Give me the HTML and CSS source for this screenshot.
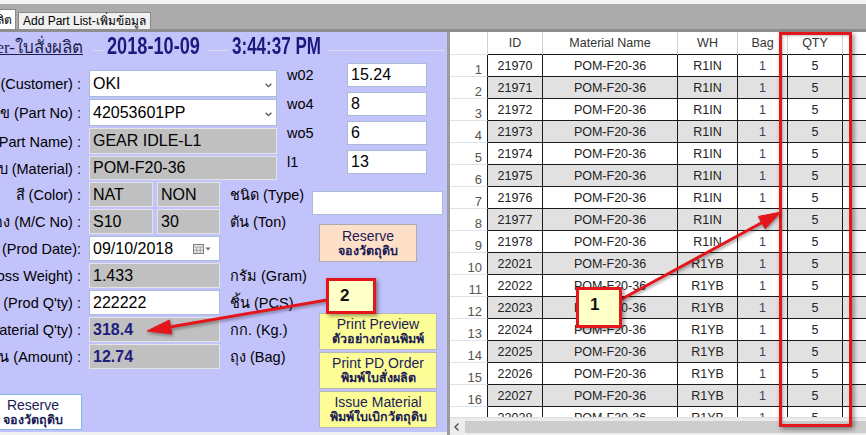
FILE: index.html
```html
<!DOCTYPE html>
<html lang="th">
<head>
<meta charset="utf-8">
<title>Production Order</title>
<link rel="stylesheet" href="styles.css">
</head>
<body>
<div class="tabbar">
  <div class="tab tab-active">ใบสั่งผลิต</div>
  <div class="tab">Add Part List-เพิ่มข้อมูล</div>
</div>
<div class="main">
  <section class="form-pane">
    <header class="form-head">
      <div class="title"><span>Production Order-ใบสั่งผลิต</span></div>
      <div class="rule rule-a"></div>
      <div class="stamp stamp-date"><span>2018-10-09</span></div>
      <div class="rule rule-b"></div>
      <div class="stamp stamp-time"><span>3:44:37 PM</span></div>
      <div class="rule rule-c"></div>
    </header>
    <div class="form-body">
      <div class="form-col">
        <div class="row h27">
          <div class="label"><span>ลูกค้า (Customer) :</span></div>
          <div class="field w188 combo"><span>OKI</span><svg class="chev" width="7" height="5" viewBox="0 0 7 5"><path d="M0.6 0.8l2.9 2.9 2.9-2.9" fill="none" stroke="#555" stroke-width="1.3"/></svg></div>
        </div>
        <div class="row h27">
          <div class="label"><span>หมายเลข (Part No) :</span></div>
          <div class="field w188 combo"><span>42053601PP</span><svg class="chev" width="7" height="5" viewBox="0 0 7 5"><path d="M0.6 0.8l2.9 2.9 2.9-2.9" fill="none" stroke="#555" stroke-width="1.3"/></svg></div>
        </div>
        <div class="row h26">
          <div class="label"><span>ชื่อชิ้นงาน (Part Name) :</span></div>
          <div class="field w188 locked">GEAR IDLE-L1</div>
        </div>
        <div class="row h24">
          <div class="label"><span>วัตถุดิบ (Material) :</span></div>
          <div class="field w188 locked">POM-F20-36</div>
        </div>
        <div class="row">
          <div class="label"><span>สี (Color) :</span></div>
          <div class="field w64 locked">NAT</div>
          <div class="field w63 locked">NON</div>
          <span class="suffix">ชนิด (Type)</span>
        </div>
        <div class="row">
          <div class="label"><span>เครื่อง (M/C No) :</span></div>
          <div class="field w64 locked">S10</div>
          <div class="field w63 locked">30</div>
          <span class="suffix">ตัน (Ton)</span>
        </div>
        <div class="row">
          <div class="label"><span>วันที่ผลิต (Prod Date):</span></div>
          <div class="field w131 datepick"><span>09/10/2018</span>
            <svg width="19" height="10" viewBox="0 0 19 10"><rect x="0.5" y="0.5" width="10" height="9" fill="#ececec" stroke="#7b7b7b"/><path d="M0.5 3h10M3.7 3v6.5M7.2 3v6.5M0.5 6.2h10" stroke="#a3a3a3"/><path d="M12.5 3.5h5l-2.5 3z" fill="#6b6b6b"/></svg>
          </div>
        </div>
        <div class="row">
          <div class="label"><span>น้ำหนัก (Gross Weight) :</span></div>
          <div class="field w131 locked">1.433</div>
          <span class="suffix">กรัม (Gram)</span>
        </div>
        <div class="row">
          <div class="label"><span>จำนวนผลิต (Prod Q'ty) :</span></div>
          <div class="field w131">222222</div>
          <span class="suffix">ชิ้น (PCS)</span>
        </div>
        <div class="row">
          <div class="label"><span>วัตถุดิบ (Material Q'ty) :</span></div>
          <div class="field w131 locked strong">318.4</div>
          <span class="suffix">กก. (Kg.)</span>
        </div>
        <div class="row">
          <div class="label"><span>จำนวน (Amount) :</span></div>
          <div class="field w131 locked strong">12.74</div>
          <span class="suffix">ถุง (Bag)</span>
        </div>
        <button class="btn btn-white"><span class="en">Reserve</span><span class="th">จองวัตถุดิบ</span></button>
      </div>
      <div class="side-col">
        <div class="wrow"><span class="wlabel">w02</span><div class="field wfield">15.24</div></div>
        <div class="wrow"><span class="wlabel">wo4</span><div class="field wfield">8</div></div>
        <div class="wrow"><span class="wlabel">wo5</span><div class="field wfield">6</div></div>
        <div class="wrow"><span class="wlabel">l1</span><div class="field wfield">13</div></div>
        <div class="field type-box"></div>
        <button class="btn btn-peach"><span class="en">Reserve</span><span class="th">จองวัตถุดิบ</span></button>
        <div class="print-group">
          <button class="btn btn-yellow"><span class="en">Print Preview</span><span class="th">ตัวอย่างก่อนพิมพ์</span></button>
          <button class="btn btn-yellow"><span class="en">Print PD Order</span><span class="th">พิมพ์ใบสั่งผลิต</span></button>
          <button class="btn btn-yellow"><span class="en">Issue Material</span><span class="th">พิมพ์ใบเบิกวัตถุดิบ</span></button>
        </div>
      </div>
    </div>
  </section>
  <section class="grid-pane">
    <div class="grid-scroll">
      <table class="grid">
        <colgroup><col class="c-rh"><col class="c-id"><col class="c-mat"><col class="c-wh"><col class="c-bag"><col class="c-qty"><col class="c-x"></colgroup>
        <thead>
          <tr><th class="rh"></th><th>ID</th><th>Material Name</th><th>WH</th><th>Bag</th><th>QTY</th><th></th></tr>
        </thead>
        <tbody>
          <tr><td class="rh">1</td><td>21970</td><td>POM-F20-36</td><td>R1IN</td><td class="bag">1</td><td>5</td><td></td></tr>
          <tr><td class="rh">2</td><td>21971</td><td>POM-F20-36</td><td>R1IN</td><td class="bag">1</td><td>5</td><td></td></tr>
          <tr><td class="rh">3</td><td>21972</td><td>POM-F20-36</td><td>R1IN</td><td class="bag">1</td><td>5</td><td></td></tr>
          <tr><td class="rh">4</td><td>21973</td><td>POM-F20-36</td><td>R1IN</td><td class="bag">1</td><td>5</td><td></td></tr>
          <tr><td class="rh">5</td><td>21974</td><td>POM-F20-36</td><td>R1IN</td><td class="bag">1</td><td>5</td><td></td></tr>
          <tr><td class="rh">6</td><td>21975</td><td>POM-F20-36</td><td>R1IN</td><td class="bag">1</td><td>5</td><td></td></tr>
          <tr><td class="rh">7</td><td>21976</td><td>POM-F20-36</td><td>R1IN</td><td class="bag">1</td><td>5</td><td></td></tr>
          <tr><td class="rh">8</td><td>21977</td><td>POM-F20-36</td><td>R1IN</td><td class="bag">1</td><td>5</td><td></td></tr>
          <tr><td class="rh">9</td><td>21978</td><td>POM-F20-36</td><td>R1IN</td><td class="bag">1</td><td>5</td><td></td></tr>
          <tr><td class="rh">10</td><td>22021</td><td>POM-F20-36</td><td>R1YB</td><td class="bag">1</td><td>5</td><td></td></tr>
          <tr><td class="rh">11</td><td>22022</td><td>POM-F20-36</td><td>R1YB</td><td class="bag">1</td><td>5</td><td></td></tr>
          <tr><td class="rh">12</td><td>22023</td><td>POM-F20-36</td><td>R1YB</td><td class="bag">1</td><td>5</td><td></td></tr>
          <tr><td class="rh">13</td><td>22024</td><td>POM-F20-36</td><td>R1YB</td><td class="bag">1</td><td>5</td><td></td></tr>
          <tr><td class="rh">14</td><td>22025</td><td>POM-F20-36</td><td>R1YB</td><td class="bag">1</td><td>5</td><td></td></tr>
          <tr><td class="rh">15</td><td>22026</td><td>POM-F20-36</td><td>R1YB</td><td class="bag">1</td><td>5</td><td></td></tr>
          <tr><td class="rh">16</td><td>22027</td><td>POM-F20-36</td><td>R1YB</td><td class="bag">1</td><td>5</td><td></td></tr>
          <tr><td class="rh">17</td><td>22028</td><td>POM-F20-36</td><td>R1YB</td><td class="bag">1</td><td>5</td><td></td></tr>
        </tbody>
      </table>
    </div>
    <div class="hscroll">
      <svg class="hs-arrow" width="15" height="18" viewBox="0 0 15 18"><path d="M8.5 5.5l-3.5 3.5 3.5 3.5" fill="none" stroke="#606060" stroke-width="1.6"/></svg>
      <div class="hs-thumb"></div>
    </div>
  </section>
</div>

<div class="qty-frame"></div>
<svg class="arrows" width="866" height="435" viewBox="0 0 866 435">
  <g fill="#e3161c" stroke="#e3161c">
    <line x1="620" y1="300" x2="763" y2="222" stroke-width="3"/>
    <polygon points="781,212 765.1,228.7 758.3,216.5" stroke-width="1"/>
    <line x1="327" y1="300" x2="170" y2="327" stroke-width="3"/>
    <polygon points="147,331 171.8,333.8 169.4,320" stroke-width="1"/>
  </g>
</svg>
<div class="callout c1">1</div>
<div class="callout c2">2</div>
</body>
</html>
```

FILE: styles.css
```css
* { box-sizing: border-box; }
html, body { margin: 0; padding: 0; }
body {
  width: 866px;
  height: 435px;
  overflow: hidden;
  position: relative;
  background: #f0f0f0;
  font-family: "Liberation Sans", Arial, "Noto Sans", sans-serif;
  color: #000;
}

/* ---------- tab strip ---------- */
.tabbar {
  height: 32px;
  background: #ababab;
  border-top: 4px solid #f3f3f3;
  border-bottom: 3px solid #8e8e8e;
  display: flex;
  align-items: flex-end;
  gap: 2px;
}
.tab {
  height: 17px;
  padding: 0 4px;
  font-size: 12px;
  line-height: 16px;
  background: #f0f0f0;
  border: 1px solid #8a8a8a;
  border-bottom: none;
  white-space: nowrap;
}
.tab-active {
  width: 70px;
  height: 20px;
  margin-left: -54px;
  background: #fff;
  text-align: right;
  line-height: 20px;
  padding-right: 3px;
}

/* ---------- main split ---------- */
.main { display: flex; height: 403px; }
.form-pane {
  width: 447px;
  flex: none;
  height: 400px;
  background: #c3c3fb;
  display: flex;
  flex-direction: column;
}
.grid-pane {
  flex: 1;
  min-width: 0;
  background: #fff;
  border-left: 3px solid #9c9c9c;
  display: flex;
  flex-direction: column;
}

/* ---------- form header ---------- */
.form-head {
  height: 31px;
  flex: none;
  display: flex;
  align-items: center;
  padding-bottom: 3px;
  white-space: nowrap;
}
.title {
  width: 83px;
  flex: none;
  display: flex;
  justify-content: flex-end;
}
.title span {
  flex: none;
  font-family: "Liberation Serif", "Times New Roman", serif;
  font-size: 17px;
  color: #1d1d4e;
  text-decoration: underline;
  text-decoration-thickness: 1px;
}
.rule {
  height: 1px;
  background: #dcdcee;
  align-self: flex-start;
  margin-top: 18px;
  flex: none;
}
.rule-a { width: 10px; margin-left: 10px; margin-right: 4px; }
.rule-b { width: 20px; margin-left: 8px; margin-right: 4px; }
.rule-c { flex: 1; margin-left: 8px; margin-right: 2px; }
.stamp {
  flex: none;
  font-family: "Liberation Sans", Arial, sans-serif;
  font-weight: bold;
  font-size: 23px;
  color: #1a1a7e;
  white-space: nowrap;
}
.stamp span { display: inline-block; transform-origin: left center; }
.stamp-date { width: 93px; }
.stamp-date span { transform: scaleX(0.79); }
.stamp-time { width: 88px; }
.stamp-time span { transform: scaleX(0.74); }

/* ---------- form body ---------- */
.form-body { display: flex; flex: 1; }
.form-col {
  width: 280px;
  flex: none;
  display: flex;
  flex-direction: column;
  gap: 2px;
  padding-top: 7px;
}
.row {
  display: flex;
  align-items: center;
  height: 25px;
  flex: none;
  white-space: nowrap;
}
.row.h27 { height: 27px; }
.row.h26 { height: 26px; }
.row.h24 { height: 24px; }
.label {
  width: 81px;
  margin-right: 8px;
  flex: none;
  display: flex;
  justify-content: flex-end;
  font-size: 14.5px;
  white-space: nowrap;
}
.label span { flex: none; }
.suffix { margin-left: 10px; font-size: 14.5px; }

.field {
  height: 100%;
  flex: none;
  display: flex;
  align-items: center;
  padding: 0 3px;
  font-size: 16px;
  background: #fff;
  border: 1px solid #a8bcd8;
  white-space: nowrap;
}
.locked { background: #c0c0c0; border-color: #e4e4e4; }
.strong { font-weight: bold; color: #1e1e80; }
.w188 { width: 188px; }
.w131 { width: 131px; }
.w64 { width: 64px; }
.w63 { width: 63px; margin-left: 4px; }
.combo { justify-content: space-between; padding-right: 4px; }
.chev { margin-top: 3px; }
.datepick { justify-content: space-between; padding-right: 7px; }

/* ---------- side column ---------- */
.side-col { flex: 1; display: flex; flex-direction: column; }
.wrow { display: flex; align-items: center; height: 24px; flex: none; }
.wrow + .wrow { margin-top: 5px; }
.wlabel { width: 67px; padding-left: 7px; font-size: 14.5px; }
.wfield { width: 80px; }
.type-box { width: 131px; height: 24px; margin-top: 17px; margin-left: 32px; }

/* ---------- buttons ---------- */
.btn {
  margin: 0;
  padding: 0;
  font-family: inherit;
  color: #1b1b55;
  display: flex;
  flex-direction: column;
  align-items: center;
  justify-content: center;
  line-height: 1.15;
  border: 1px solid #ababab;
  flex: none;
}
.btn .en { font-size: 14px; }
.btn .th { font-size: 12.5px; font-weight: bold; }
.btn-peach {
  width: 98px;
  height: 38px;
  margin-top: 9px;
  margin-left: 39px;
  background: #fde0c7;
}
.print-group {
  margin-top: 51px;
  margin-left: 39px;
  display: flex;
  flex-direction: column;
  gap: 2px;
}
.btn-yellow { width: 118px; height: 37px; background: #fdfd98; border-color: #b7b7b7; }
.btn-white {
  width: 98px;
  height: 36px;
  margin-top: 23px;
  margin-left: -16px;
  background: #fff;
  border-color: #82b6e4;
}

/* ---------- grid ---------- */
.grid-scroll { height: 385px; overflow: hidden; flex: none; }
.grid {
  border-collapse: separate;
  border-spacing: 0;
  table-layout: fixed;
  width: 440px;
  font-size: 12.5px;
  color: #222;
}
.c-rh { width: 38px; }
.c-id { width: 55px; }
.c-mat { width: 135px; }
.c-wh { width: 60px; }
.c-bag { width: 50px; }
.c-qty { width: 55px; }
.c-x { width: 47px; }
.grid th {
  height: 23px;
  padding: 0;
  font-weight: normal;
  color: #333;
  background: #fff;
  border-right: 1px solid #d2d2d2;
  border-bottom: 1px solid #1a1a1a;
}
.grid th.rh { border-bottom-color: #dde3ec; border-right-color: #d2d2d2; }
.grid td {
  height: 22px;
  padding: 0;
  text-align: center;
  border-right: 1px solid #1a1a1a;
  border-bottom: 1px solid #1a1a1a;
  white-space: nowrap;
  overflow: hidden;
}
.grid tbody tr:nth-child(even) td { background: #e1e1e1; }
.grid td.rh,
.grid tbody tr:nth-child(even) td.rh {
  background: #fff;
  text-align: right;
  vertical-align: bottom;
  padding-right: 5px;
  font-size: 13px;
  line-height: 13px;
  color: #555;
  border-bottom-color: #dde3ec;
}
.grid td.bag { color: #3c3c5a; }

.hscroll {
  height: 18px;
  flex: none;
  display: flex;
  align-items: center;
  background: #ececec;
  border-top: 1px solid #dcdcdc;
}
.hs-arrow { flex: none; }
.hs-thumb { flex: 1; height: 12px; background: #cdcdcd; }

/* ---------- annotations ---------- */
.qty-frame {
  position: absolute;
  left: 779px;
  top: 32px;
  width: 73px;
  height: 395px;
  border: 3px solid #e3161c;
  box-shadow: 2px 2px 5px rgba(0, 0, 0, 0.45), inset 1px 1px 3px rgba(0, 0, 0, 0.25);
}
.arrows {
  position: absolute;
  left: 0;
  top: 0;
  pointer-events: none;
  filter: drop-shadow(1px 2px 1.5px rgba(0, 0, 0, 0.35));
}
.callout {
  position: absolute;
  border: 3px solid #e3161c;
  background: #ffffc8;
  font-weight: bold;
  font-size: 17px;
  line-height: 20px;
  padding: 5px 0 0 11px;
  color: #111;
  box-shadow: 2px 2px 4px rgba(0, 0, 0, 0.4);
}
.c1 { left: 576px; top: 287px; width: 46px; height: 41px; }
.c2 { left: 326px; top: 278px; width: 50px; height: 36px; }
```
